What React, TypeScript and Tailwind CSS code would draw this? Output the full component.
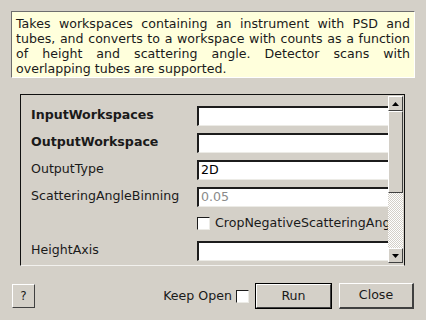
import React from "react";

const font = { fontFamily: '"DejaVu Sans", sans-serif' };

function Field({ children, muted }: { children?: React.ReactNode; muted?: boolean }) {
  return (
    <div
      className={
        "h-[20px] w-[191px] bg-white border-t-2 border-l-2 border-b border-t-[#1c1c1c] border-l-[#1c1c1c] border-b-[#ecebe6] pl-[2px] flex items-center text-[12.6px] leading-none " +
        (muted ? "text-[#8a8a8a]" : "text-black")
      }
    >
      {children}
    </div>
  );
}

function Row({ label, bold, children }: { label?: string; bold?: boolean; children: React.ReactNode }) {
  return (
    <div className="h-[27px] flex items-center shrink-0">
      <div className={"w-[176px] pl-[10px] text-[12.6px] text-[#1a1a1a] " + (bold ? "font-bold" : "")}>{label}</div>
      {children}
    </div>
  );
}

function Arrow({ up }: { up?: boolean }) {
  return (
    <div className="h-[15px] w-[15px] bg-[#d4d0c8] border-t border-l border-t-white border-l-white border-b border-r border-b-[#404040] border-r-[#404040] flex items-center justify-center">
      <svg width="7" height="4" viewBox="0 0 7 4">
        {up ? <polygon points="3.5,0 7,4 0,4" fill="#000" /> : <polygon points="0,0 7,0 3.5,4" fill="#000" />}
      </svg>
    </div>
  );
}

export default function App() {
  return (
    <div className="w-[426px] h-[320px] bg-[#d4d0c8] relative overflow-hidden" style={font}>
      <div className="pt-[11px] px-[11px]">
        <div className="h-[67px] bg-[#ffffdc] border-t border-l border-t-[#6e6e6e] border-l-[#6e6e6e] border-b border-r border-b-white border-r-white px-[4px] pt-[4px] text-[12.6px] leading-[15px] text-[#1a1a1a] text-justify">
          Takes workspaces containing an instrument with PSD and tubes, and converts to a workspace with counts as a function of height and scattering angle. Detector scans with overlapping tubes are supported.
        </div>
      </div>

      <div className="mt-[16px] ml-[20px] w-[385px] h-[172px] border-t border-l border-r border-[#101010] border-b border-b-[#f2f1ee] flex">
        <div className="flex-1 overflow-hidden pt-[7px] flex flex-col">
          <Row label="InputWorkspaces" bold>
            <Field />
          </Row>
          <Row label="OutputWorkspace" bold>
            <Field />
          </Row>
          <Row label="OutputType">
            <Field>2D</Field>
          </Row>
          <Row label="ScatteringAngleBinning">
            <Field muted>0.05</Field>
          </Row>
          <Row>
            <div className="flex items-center whitespace-nowrap overflow-hidden w-[191px]">
              <div className="w-[13px] h-[13px] bg-white border-t border-l border-t-[#1c1c1c] border-l-[#1c1c1c] border-b border-r border-b-[#ecebe6] border-r-[#ecebe6] shrink-0" />
              <span className="ml-[5px] text-[12.6px] text-[#1a1a1a]">CropNegativeScatteringAngles</span>
            </div>
          </Row>
          <Row label="HeightAxis">
            <Field />
          </Row>
        </div>
        <div className="w-[16px] pt-[1px] pb-[2px] flex flex-col">
          <Arrow up />
          <div className="h-[82px] w-[15px] bg-[#d4d0c8] border-t border-l border-t-white border-l-white border-b border-r border-b-[#404040] border-r-[#404040]" />
          <div className="flex-1 w-[15px] bg-[repeating-conic-gradient(#d4d0c8_0_25%,#ffffff_0_50%)] bg-size-[2px_2px]" />
          <Arrow />
        </div>
      </div>

      <div className="mt-[17px] flex items-center px-[12px] text-[12.6px] text-[#1a1a1a]">
        <div className="w-[23px] h-[24px] border-t border-l border-t-white border-l-white border-b border-r border-b-[#404040] border-r-[#404040] flex items-center justify-center text-[12px]">
          ?
        </div>
        <div className="flex-1" />
        <span>Keep Open</span>
        <div className="ml-[4px] w-[13px] h-[13px] bg-white border-t border-l border-t-[#1c1c1c] border-l-[#1c1c1c] border-b border-r border-b-[#ecebe6] border-r-[#ecebe6]" />
        <div className="ml-[6px] w-[77px] h-[26px] border border-black flex">
          <div className="flex-1 border-t border-l border-t-white border-l-white border-b border-r border-b-[#404040] border-r-[#404040] flex items-center justify-center">
            Run
          </div>
        </div>
        <div className="ml-[7px] w-[75px] h-[26px] border-t border-l border-t-white border-l-white border-b-2 border-r-2 border-b-[#404040] border-r-[#404040] flex items-center justify-center">
          Close
        </div>
      </div>
    </div>
  );
}
